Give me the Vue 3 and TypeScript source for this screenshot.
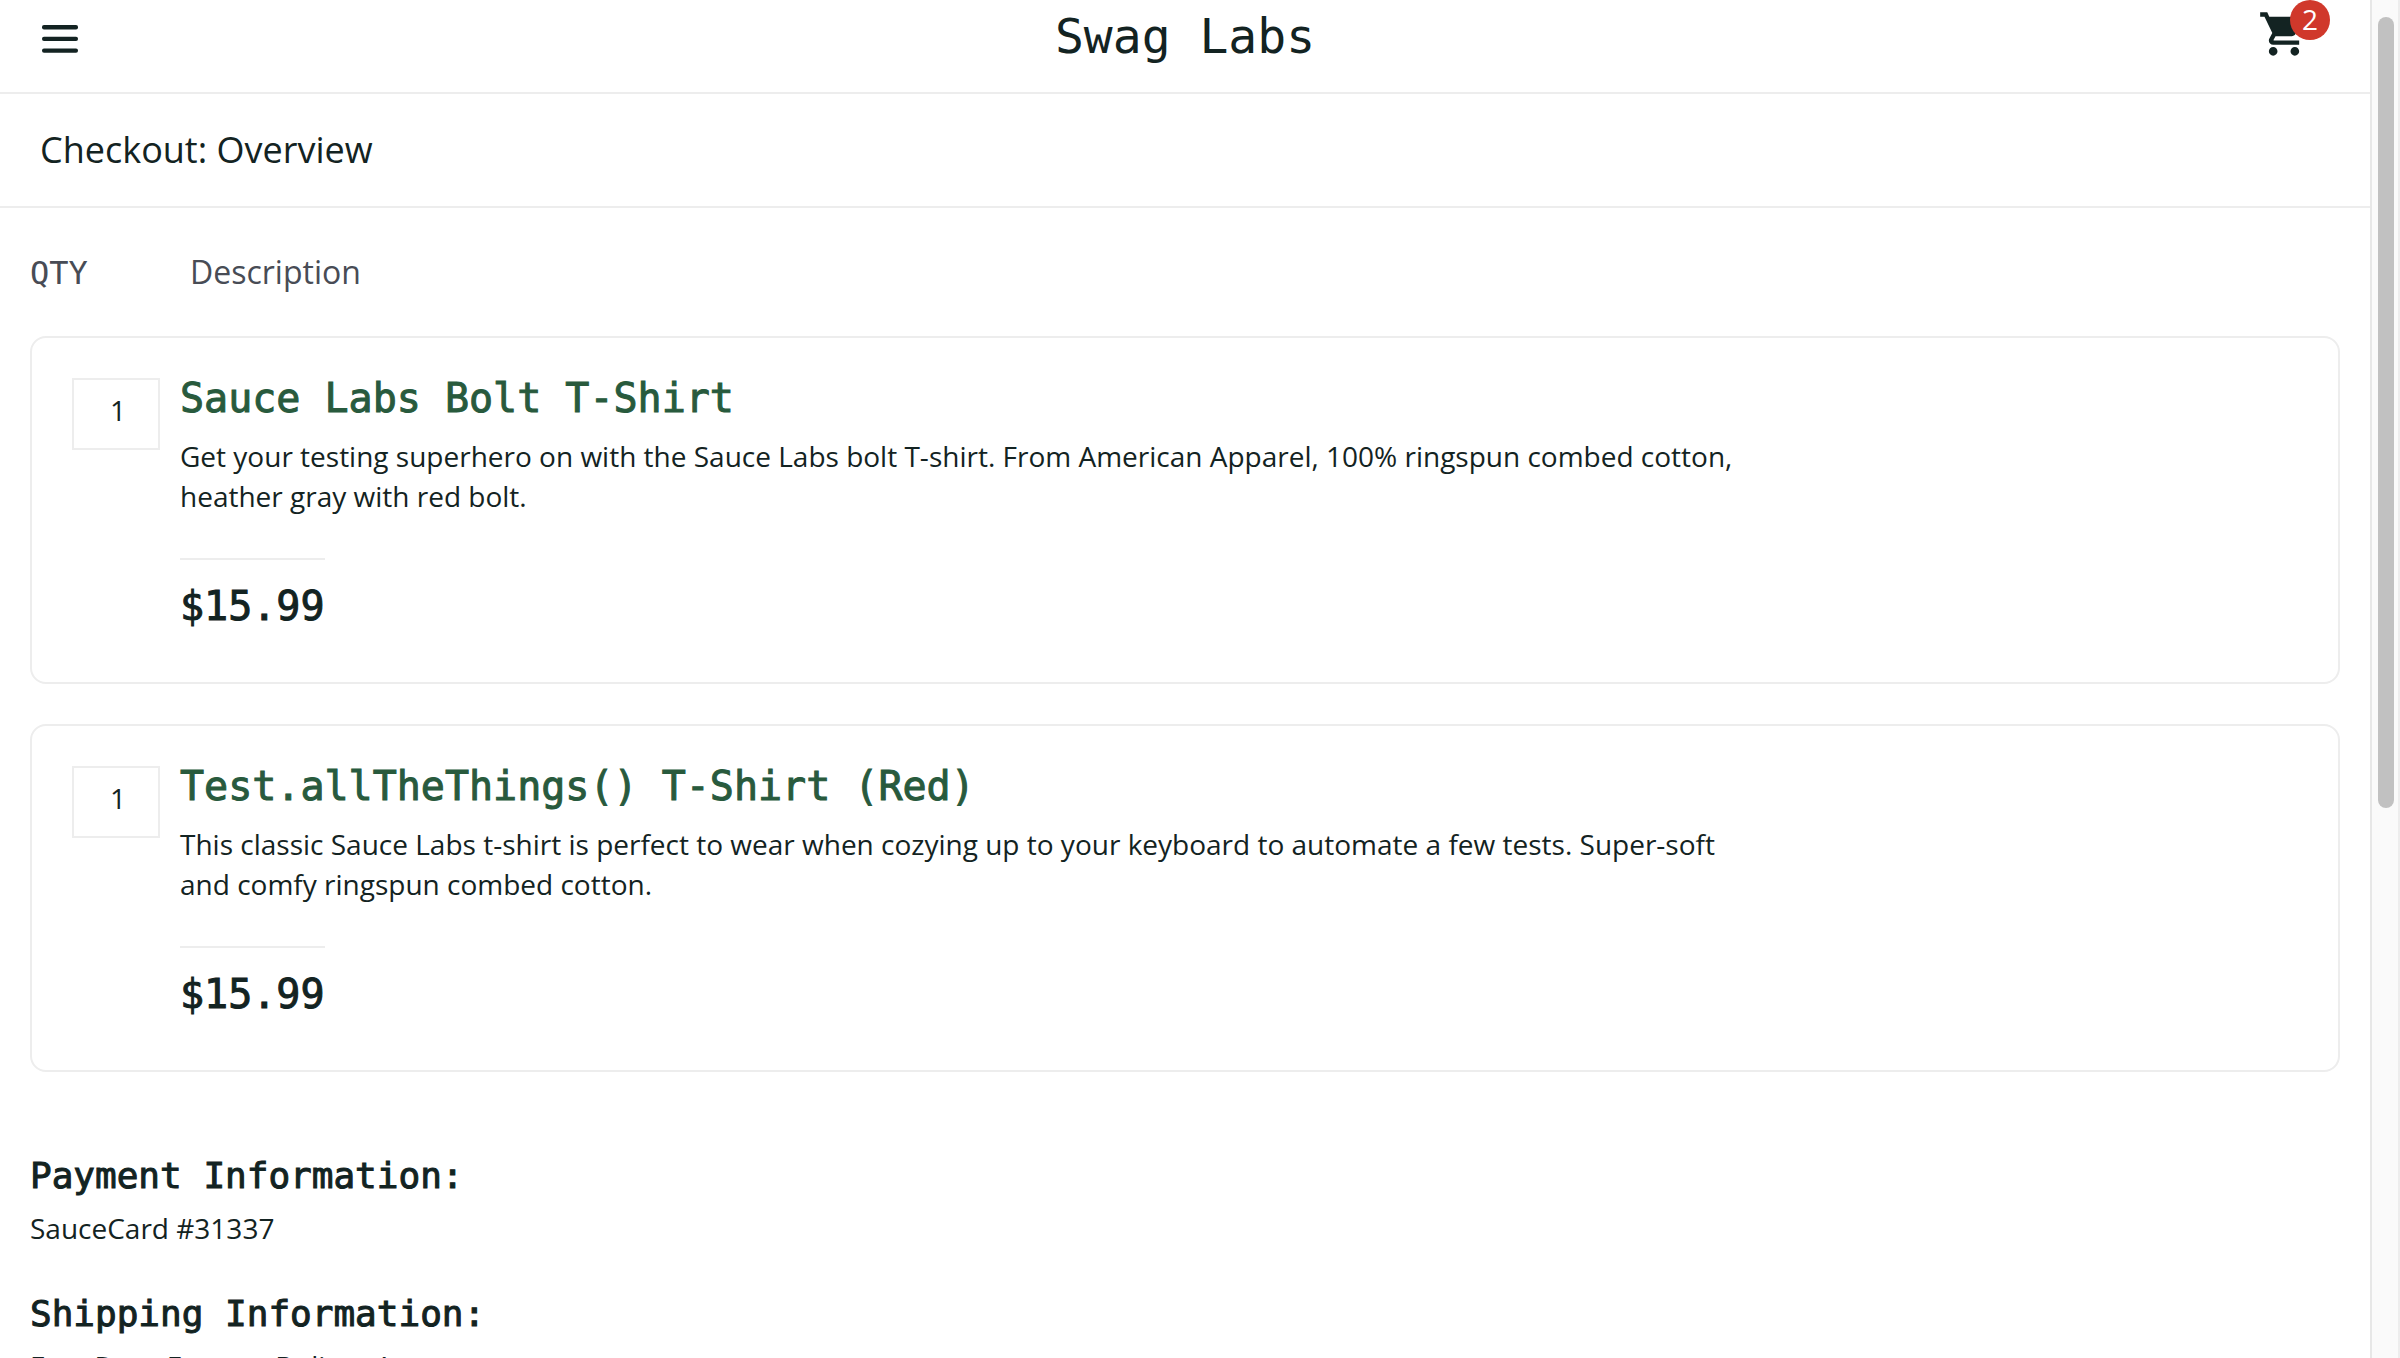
<script setup lang="ts">
interface CartItem {
  id: number
  name: string
  description: string
  price: string
  quantity: number
}

interface SummaryEntry {
  label: string
  value: string
}

const items: CartItem[] = [
  {
    id: 1,
    name: 'Sauce Labs Bolt T-Shirt',
    description:
      'Get your testing superhero on with the Sauce Labs bolt T-shirt. From American Apparel, 100% ringspun combed cotton, heather gray with red bolt.',
    price: '$15.99',
    quantity: 1,
  },
  {
    id: 3,
    name: 'Test.allTheThings() T-Shirt (Red)',
    description:
      'This classic Sauce Labs t-shirt is perfect to wear when cozying up to your keyboard to automate a few tests. Super-soft and comfy ringspun combed cotton.',
    price: '$15.99',
    quantity: 1,
  },
]

const summary: SummaryEntry[] = [
  { label: 'Payment Information:', value: 'SauceCard #31337' },
  { label: 'Shipping Information:', value: 'Free Pony Express Delivery!' },
]

const cartCount = items.reduce((total, item) => total + item.quantity, 0)
</script>

<template>
  <div class="shell">
    <div class="page">
      <header class="header">
        <button class="menu" type="button" aria-label="Open Menu">
          <svg viewBox="0 0 36 28" width="36" height="28" aria-hidden="true">
            <rect x="0" y="0" width="36" height="4.4" rx="2" />
            <rect x="0" y="11.7" width="36" height="4.4" rx="2" />
            <rect x="0" y="23.4" width="36" height="4.4" rx="2" />
          </svg>
        </button>
        <div class="logo">Swag Labs</div>
        <a class="cart" href="#cart" aria-label="Shopping cart">
          <svg viewBox="0 0 24 24" width="52" height="52" aria-hidden="true">
            <path
              d="M7 18c-1.1 0-1.99.9-1.99 2S5.9 22 7 22s2-.9 2-2-.9-2-2-2zM1 2v2h2l3.6 7.59-1.35 2.45c-.16.28-.25.61-.25.96 0 1.1.9 2 2 2h12v-2H7.42c-.14 0-.25-.11-.25-.25l.03-.12.9-1.63h7.45c.75 0 1.41-.41 1.75-1.03l3.58-6.49c.08-.14.12-.31.12-.48 0-.55-.45-1-1-1H5.21l-.94-2H1zm16 16c-1.1 0-1.99.9-1.99 2s.89 2 1.99 2 2-.9 2-2-.9-2-2-2z"
            />
          </svg>
          <span class="badge">{{ cartCount }}</span>
        </a>
      </header>

      <h1 class="title">Checkout: Overview</h1>

      <main class="content">
        <div class="labels">
          <span class="qty-label">QTY</span>
          <span>Description</span>
        </div>

        <ul class="list">
          <li v-for="item in items" :key="item.id" class="card">
            <div class="quantity">{{ item.quantity }}</div>
            <div class="details">
              <a class="name" :href="`#item-${item.id}`">{{ item.name }}</a>
              <p class="description">{{ item.description }}</p>
              <div class="price">{{ item.price }}</div>
            </div>
          </li>
        </ul>

        <dl class="summary">
          <div v-for="entry in summary" :key="entry.label">
            <dt>{{ entry.label }}</dt>
            <dd>{{ entry.value }}</dd>
          </div>
        </dl>
      </main>
    </div>

    <div class="scrollbar" aria-hidden="true">
      <div class="thumb"></div>
    </div>
  </div>
</template>

<style>
body {
  background: #fff;
}
</style>

<style scoped>
.shell {
  --ink: #132322;
  --line: #ededed;
  --mono: 'DejaVu Sans Mono', 'Liberation Mono', monospace;
  display: flex;
  height: 100vh;
  overflow: hidden;
  color: var(--ink);
  font-family: 'Open Sans', 'Noto Sans', sans-serif;
  font-size: 28px;
  line-height: 40px;
}

.page {
  flex: 1;
  min-width: 0;
}

.header {
  display: grid;
  grid-template-columns: 1fr auto 1fr;
  align-items: start;
  height: 92px;
  padding: 0 40px;
  border-bottom: 2px solid var(--line);
}

.menu {
  display: flex;
  align-items: center;
  justify-content: center;
  justify-self: start;
  width: 40px;
  height: 78px;
  padding: 0;
  border: 0;
  background: none;
  cursor: pointer;
}

.menu svg,
.cart svg {
  display: block;
  fill: var(--ink);
}

.logo {
  font-family: var(--mono);
  font-size: 48px;
  line-height: 72px;
}

.cart {
  position: relative;
  justify-self: end;
  width: 72px;
  padding-top: 8px;
  text-decoration: none;
}

.badge {
  position: absolute;
  top: 0;
  right: 0;
  width: 40px;
  height: 40px;
  border-radius: 50%;
  background: #d0382b;
  color: #fff;
  line-height: 38px;
  text-align: center;
}

/* Medium weight for a monospace face that only comes in regular and bold */
.name,
.price,
.summary dt {
  -webkit-text-stroke: 1px currentColor;
}

.title {
  margin: 0;
  padding: 36px 40px;
  border-bottom: 2px solid var(--line);
  font-size: 36px;
  font-weight: 500;
  line-height: 40px;
}

.content {
  padding: 42px 30px;
}

.labels {
  display: flex;
  align-items: baseline;
  margin-bottom: 41px;
  color: #484c55;
  font-size: 32px;
  font-weight: 500;
  line-height: 44px;
}

.qty-label {
  width: 160px;
  font-family: var(--mono);
}

.list {
  display: flex;
  flex-direction: column;
  gap: 40px;
  margin: 0;
  padding: 0;
  list-style: none;
}

.card {
  display: flex;
  align-items: flex-start;
  gap: 20px;
  padding: 40px 40px 56px;
  border: 2px solid var(--line);
  border-radius: 16px;
}

.quantity {
  flex: none;
  width: 88px;
  height: 72px;
  padding: 10px 0 0 4px;
  border: 2px solid var(--line);
  box-sizing: border-box;
  text-align: center;
}

.details {
  display: flex;
  flex: 1;
  flex-direction: column;
  align-items: flex-start;
}

.name {
  color: #285a3d;
  font-family: var(--mono);
  font-size: 40px;
  line-height: 40px;
  text-decoration: none;
}

.description {
  max-width: 74%;
  margin: 18px 0 42px;
}

.price {
  padding-top: 26px;
  border-top: 2px solid var(--line);
  font-family: var(--mono);
  font-size: 40px;
  line-height: 40px;
}

.summary {
  display: flex;
  flex-direction: column;
  gap: 46px;
  margin: 84px 0 0;
}

.summary dt {
  margin-bottom: 12px;
  font-family: var(--mono);
  font-size: 36px;
}

.summary dd {
  margin: 0;
}

.scrollbar {
  flex: none;
  width: 30px;
  padding: 17px 4px 0 6px;
  border-right: 2px solid var(--line);
  border-left: 2px solid #e7e7e7;
  background: #fafafa;
  box-sizing: border-box;
}

.thumb {
  height: 59%;
  border-radius: 8px;
  background: #c1c1c1;
}
</style>
